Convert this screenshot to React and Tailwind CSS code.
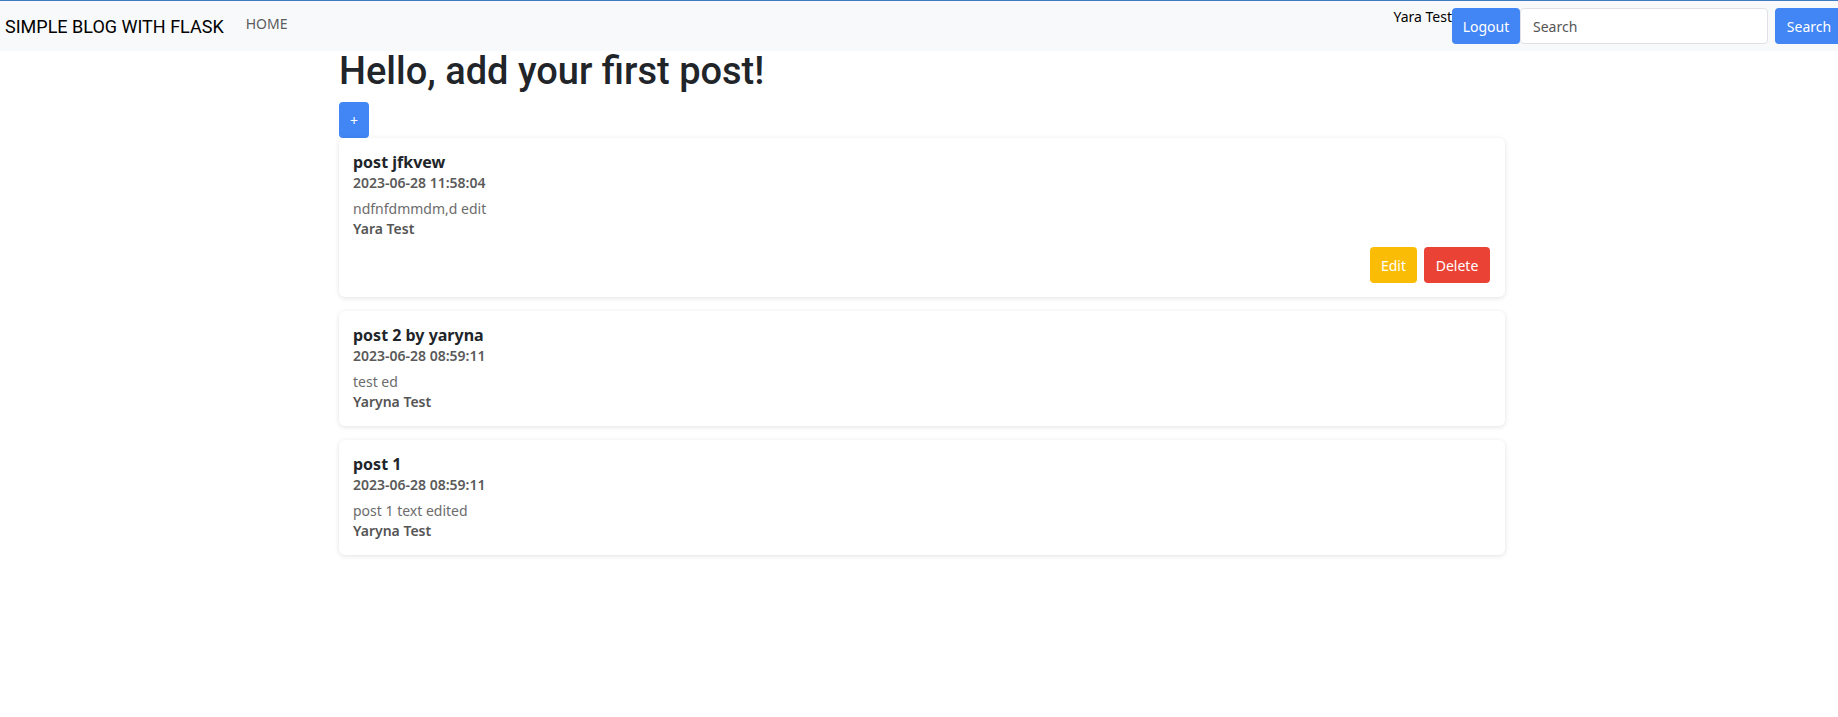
// Simple blog — post list page

const posts = [
  {
    id: 3,
    title: 'post jfkvew',
    date: '2023-06-28 11:58:04',
    body: 'ndfnfdmmdm,d edit',
    author: 'Yara Test',
    mine: true,
  },
  {
    id: 2,
    title: 'post 2 by yaryna',
    date: '2023-06-28 08:59:11',
    body: 'test ed',
    author: 'Yaryna Test',
  },
  {
    id: 1,
    title: 'post 1',
    date: '2023-06-28 08:59:11',
    body: 'post 1 text edited',
    author: 'Yaryna Test',
  },
];

function Navbar() {
  return (
    <nav className="flex items-start h-[51px] bg-[#f8f9fa] border-t border-[#3f7bc3] overflow-hidden">
      <a className="ml-[5px] mt-[11px] font-['Roboto',sans-serif] text-[18px] leading-[30px] text-black whitespace-nowrap">
        SIMPLE BLOG WITH FLASK
      </a>
      <a className="ml-[22px] mt-[13px] text-[14px] leading-[20px] text-[#5c5c5c]">HOME</a>

      <div className="ml-auto mr-[-5px] flex items-start">
        <span className="mt-[6px] text-[14px] leading-[20px] text-black whitespace-nowrap">Yara Test</span>
        <button className="mt-[7px] h-[36px] w-[68px] rounded-[4px] bg-[#4285f4] text-white text-[14px]">
          Logout
        </button>
        <input
          placeholder="Search"
          className="mt-[7px] h-[36px] w-[248px] rounded-[4px] border border-[#dee2e6] bg-white px-[12px] text-[14px] placeholder:text-[#555] outline-none"
        />
        <button className="ml-[7px] mt-[7px] h-[36px] w-[68px] rounded-[4px] bg-[#4285f4] text-white text-[14px]">
          Search
        </button>
      </div>
    </nav>
  );
}

function PostCard({ post }) {
  return (
    <div className="bg-white rounded-[6px] shadow-[0_1px_5px_rgba(0,0,0,0.12)] px-[14px] pt-[14px] pb-[14px]">
      <h5 className="text-[16px] leading-[20px] font-bold text-[#212529]">{post.title}</h5>
      <p className="mt-[1px] text-[14px] leading-[20px] font-semibold text-[#5a5a5a]">{post.date}</p>
      <p className="mt-[6px] text-[14px] leading-[20px] text-[#6c6c6c]">{post.body}</p>
      <p className="text-[14px] leading-[20px] font-semibold text-[#555]">{post.author}</p>
      {post.mine && (
        <div className="mt-[8px] flex justify-end gap-[7px] pr-px">
          <button className="h-[36px] w-[47px] rounded-[4px] bg-[#fbbc05] text-white text-[14px]">Edit</button>
          <button className="h-[36px] w-[66px] rounded-[4px] bg-[#ea4335] text-white text-[14px]">Delete</button>
        </div>
      )}
    </div>
  );
}

export default function App() {
  return (
    <div className="min-h-[717px] bg-white font-['Noto_Sans',sans-serif]">
      <Navbar />
      <main className="ml-[339px] w-[1166px]">
        <h1 className="font-['Roboto',sans-serif] text-[38px] leading-[40px] font-medium text-[#212529]">
          Hello, add your first post!
        </h1>
        <button className="mt-[11px] h-[36px] w-[30px] rounded-[4px] bg-[#4285f4] text-white text-[14px]">+</button>
        <div className="flex flex-col gap-[14px]">
          {posts.map((p) => (
            <PostCard key={p.id} post={p} />
          ))}
        </div>
      </main>
    </div>
  );
}
